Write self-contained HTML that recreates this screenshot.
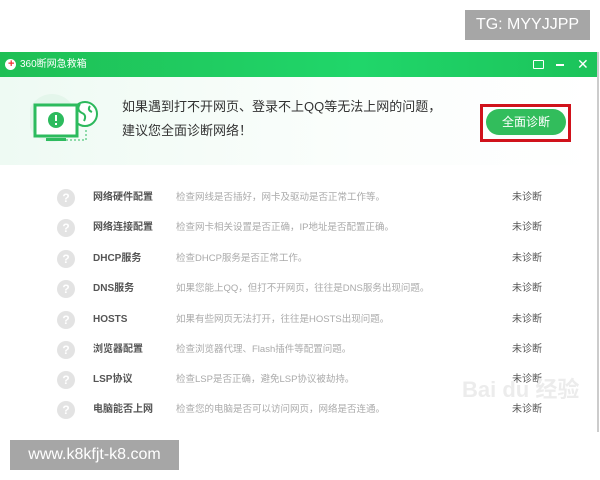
<!DOCTYPE html>
<html><head><meta charset="utf-8"><style>
*{margin:0;padding:0;box-sizing:border-box}
body{width:600px;height:480px;background:#fff;position:relative;overflow:hidden;font-family:"Liberation Sans","Noto Sans CJK SC",sans-serif}
.tg{position:absolute;left:465px;top:10px;width:125px;height:30px;background:#a6a6a6;color:#fff;font-size:16px;line-height:30px;text-align:center}
.url{position:absolute;left:10px;top:440px;width:169px;height:30px;background:#a6a6a6;color:#fff;font-size:16px;line-height:30px;text-align:center}
.title{position:absolute;left:0;top:52px;width:598px;height:25px;background:linear-gradient(90deg,#1fbf55,#20d66a 60%,#1cc35a);color:#fff;font-size:10px;line-height:25px}
.hdr{position:absolute;left:0;top:77px;width:598px;height:88px;background:linear-gradient(90deg,#eefaf3,#fbfefc 60%,#fff)}
.vline{position:absolute;left:597px;top:52px;width:2px;height:380px;background:#ccc}
.row{position:absolute;left:0;width:598px;height:20px;font-size:10px;line-height:20px}
.q{position:absolute;left:57px;top:1px;width:18px;height:18px;border-radius:50%;background:#e3e3e3;color:#fff;font-size:12px;text-align:center;line-height:18px;font-weight:bold}
.n{position:absolute;left:93px;color:#555;font-weight:bold}
.d{position:absolute;left:176px;color:#aaa;font-size:9.5px}
.s{position:absolute;left:512px;color:#555}
</style></head><body>
<div class="tg">TG: MYYJJPP</div>
<div class="title"><span style="position:absolute;left:5px;top:7px;width:11px;height:11px;border-radius:50%;background:#fff"></span><span style="position:absolute;left:8px;top:7px;color:#e33;font-size:11px;line-height:11px;font-weight:bold">+</span><span style="position:absolute;left:20px">360断网急救箱</span>
<span style="position:absolute;left:533px;top:8px;width:11px;height:9px;border:1.5px solid #fff;border-radius:1px"></span>
<span style="position:absolute;left:556px;top:12px;width:8px;height:1.5px;background:#fff"></span>
<span style="position:absolute;left:577px;top:0;font-size:14px">✕</span></div>
<div class="hdr">
<svg style="position:absolute;left:30px;top:17px" width="70" height="55" viewBox="0 0 70 55">
<circle cx="22" cy="24" r="24" fill="#e4f6eb"/>
<circle cx="55" cy="20" r="12" fill="#fff" stroke="#2cb85c" stroke-width="2"/>
<path d="M50 10 q-4 6 2 9 q5 2 2 8 M60 12 q-3 4 2 6" fill="none" stroke="#2cb85c" stroke-width="2"/>
<rect x="5" y="11" width="42" height="31" fill="#fff" stroke="#2dbb5e" stroke-width="3"/>
<circle cx="26" cy="26" r="8" fill="#2dbb5e"/><rect x="25" y="21" width="2" height="6" fill="#fff"/><rect x="25" y="29" width="2" height="2" fill="#fff"/>
<rect x="16" y="44" width="20" height="3" fill="#2dbb5e"/><path d="M36 46 h20 v-12" fill="none" stroke="#2dbb5e" stroke-dasharray="2 2"/></svg>
<div style="position:absolute;left:122px;top:18px;font-size:13px;color:#333;line-height:24px">如果遇到打不开网页、登录不上QQ等无法上网的问题，<br>建议您全面诊断网络！</div>
<div style="position:absolute;left:480px;top:27px;width:91px;height:38px;border:3px solid #d0121b"></div>
<div style="position:absolute;left:486px;top:32px;width:80px;height:26px;border-radius:13px;background:#32bd5c;color:#fff;font-size:12px;line-height:26px;text-align:center">全面诊断</div>
</div>
<div class="vline"></div>
<div class="row" style="top:188px"><div class="q">?</div><div class="n">网络硬件配置</div><div class="d">检查网线是否插好，网卡及驱动是否正常工作等。</div><div class="s">未诊断</div></div>
<div class="row" style="top:218px"><div class="q">?</div><div class="n">网络连接配置</div><div class="d">检查网卡相关设置是否正确，IP地址是否配置正确。</div><div class="s">未诊断</div></div>
<div class="row" style="top:249px"><div class="q">?</div><div class="n">DHCP服务</div><div class="d">检查DHCP服务是否正常工作。</div><div class="s">未诊断</div></div>
<div class="row" style="top:279px"><div class="q">?</div><div class="n">DNS服务</div><div class="d">如果您能上QQ，但打不开网页，往往是DNS服务出现问题。</div><div class="s">未诊断</div></div>
<div class="row" style="top:310px"><div class="q">?</div><div class="n">HOSTS</div><div class="d">如果有些网页无法打开，往往是HOSTS出现问题。</div><div class="s">未诊断</div></div>
<div class="row" style="top:340px"><div class="q">?</div><div class="n">浏览器配置</div><div class="d">检查浏览器代理、Flash插件等配置问题。</div><div class="s">未诊断</div></div>
<div class="row" style="top:370px"><div class="q">?</div><div class="n">LSP协议</div><div class="d">检查LSP是否正确，避免LSP协议被劫持。</div><div class="s">未诊断</div></div>
<div class="row" style="top:400px"><div class="q">?</div><div class="n">电脑能否上网</div><div class="d">检查您的电脑是否可以访问网页，网络是否连通。</div><div class="s">未诊断</div></div>
<div style="position:absolute;left:462px;top:372px;font-size:22px;color:#ececec;font-weight:bold">Bai du 经验</div>
<div class="url">www.k8kfjt-k8.com</div>
</body></html>
